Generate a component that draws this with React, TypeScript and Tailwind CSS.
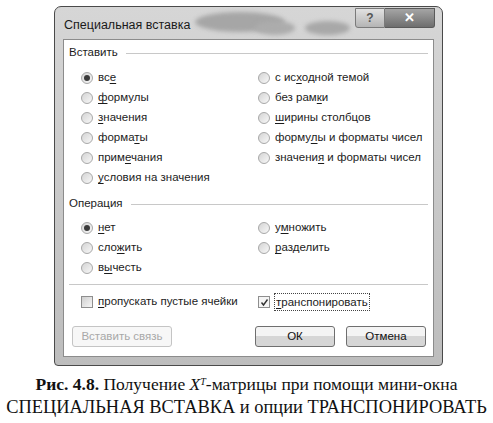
import React from "react";

const UI = { fontFamily: '"Liberation Sans", Arial, sans-serif' };
const SERIF = { fontFamily: '"Liberation Serif", "Times New Roman", serif' };

// label with one underlined access key
const Label = ({ text, k }: { text: string; k?: number }) => {
  if (k === undefined) return <span>{text}</span>;
  return (
    <span>
      {text.slice(0, k)}
      <span className="underline underline-offset-2">{text[k]}</span>
      {text.slice(k + 1)}
    </span>
  );
};

const Radio = ({ text, k, checked }: { text: string; k?: number; checked?: boolean }) => (
  <div className="flex h-[20px] items-center gap-[5px]">
    <span className="flex h-[12px] w-[12px] shrink-0 items-center justify-center rounded-full border border-[#a8a8a8] bg-gradient-to-br from-[#d4d4d4] to-[#f8f8f8]">
      {checked && <span className="h-[6px] w-[6px] rounded-full bg-[#3a3a3a]" />}
    </span>
    <Label text={text} k={k} />
  </div>
);

const GroupHeader = ({ title }: { title: string }) => (
  <div className="flex h-[14px] items-center gap-[8px]">
    <span>{title}</span>
    <div className="h-px flex-1 bg-[#c8c8c8]" />
  </div>
);

const Button = ({ children, w, disabled }: { children: React.ReactNode; w: string; disabled?: boolean }) => (
  <div
    className={`flex h-[21px] items-center justify-center rounded-[3px] border ${w} ${
      disabled
        ? "border-[#c4c4c4] bg-[#f7f7f7] text-[#a8a8a8]"
        : "border-[#6f6f6f] bg-gradient-to-b from-[#f4f4f4] from-50% to-[#d6d6d6] to-50% text-[#111]"
    }`}
  >
    {children}
  </div>
);

export default function App() {
  return (
    <div className="min-h-[423px] w-[493px] bg-white">
      {/* dialog window */}
      <div className="pl-[54px] pt-[6px]">
        <div
          className="relative flex h-[360px] w-[389px] flex-col overflow-hidden rounded-t-[7px] rounded-b-[4px] border border-[#4a4a4a] bg-gradient-to-b from-[#d6d6d6] to-[#bdbdbd] text-[11.5px] text-[#1c1c1c]"
          style={UI}
        >
          {/* glass blobs */}
          <div className="pointer-events-none absolute left-[140px] top-[5px] h-[20px] w-[90px] rounded-[50%] bg-[#a6a6a6] blur-[2px]" />
          <div className="pointer-events-none absolute left-[200px] top-[14px] h-[14px] w-[40px] rounded-[50%] bg-[#acacac] blur-[2px]" />
          <div className="pointer-events-none absolute left-[250px] top-[14px] h-[14px] w-[45px] rounded-[50%] bg-[#a8a8a8] blur-[2px]" />

          {/* title bar */}
          <div className="relative flex h-[32px] shrink-0 items-start justify-between pl-[9px]">
            <span className="mt-[9px] text-[12.5px] text-[#1a1a1a]">Специальная вставка</span>
            <div className="mr-[7px] mt-[1px] flex">
              <div className="flex h-[20px] w-[30px] items-center justify-center rounded-bl-[3px] border border-[#7a7a7a] bg-gradient-to-b from-[#e2e2e2] to-[#b4b4b4] text-[12px] font-bold text-[#555]">
                ?
              </div>
              <div className="flex h-[20px] w-[50px] items-center justify-center rounded-br-[3px] border border-l-0 border-[#5a5a5a] bg-gradient-to-b from-[#a5a5a5] to-[#6e6e6e] text-[13px] font-bold text-white">
                ✕
              </div>
            </div>
          </div>

          {/* client area */}
          <div className="mx-[8px] mb-[8px] flex flex-1 flex-col border border-[#8c8c8c] bg-white px-[5px] pt-[6px]">
            <GroupHeader title="Вставить" />
            <div className="mt-[8px] grid grid-cols-[177px_1fr] pl-[12px]">
              <div className="flex flex-col">
                <Radio text="все" k={2} checked />
                <Radio text="формулы" k={0} />
                <Radio text="значения" k={0} />
                <Radio text="форматы" k={5} />
                <Radio text="примечания" k={4} />
                <Radio text="условия на значения" k={0} />
              </div>
              <div className="flex flex-col">
                <Radio text="с исходной темой" k={4} />
                <Radio text="без рамки" k={7} />
                <Radio text="ширины столбцов" k={0} />
                <Radio text="формулы и форматы чисел" k={5} />
                <Radio text="значения и форматы чисел" k={7} />
              </div>
            </div>

            <div className="mt-[9px]">
              <GroupHeader title="Операция" />
            </div>
            <div className="mt-[7px] grid grid-cols-[177px_1fr] pl-[12px]">
              <div className="flex flex-col">
                <Radio text="нет" k={0} checked />
                <Radio text="сложить" k={3} />
                <Radio text="вычесть" k={1} />
              </div>
              <div className="flex flex-col">
                <Radio text="умножить" k={1} />
                <Radio text="разделить" k={0} />
              </div>
            </div>

            <div className="mt-[6px] h-px bg-[#c8c8c8]" />

            <div className="mt-[7px] grid h-[20px] grid-cols-[177px_1fr] items-center pl-[12px]">
              <div className="flex items-center gap-[5px]">
                <span className="h-[12px] w-[12px] border border-[#8e8e8e] bg-gradient-to-br from-[#cfcfcf] to-[#f6f6f6]" />
                <Label text="пропускать пустые ячейки" k={0} />
              </div>
              <div className="flex items-center gap-[4px]">
                <span className="flex h-[12px] w-[12px] items-center justify-center border border-[#8e8e8e] bg-[#f4f4f4]">
                  <svg width="9" height="9" viewBox="0 0 9 9">
                    <path d="M1.5 4.5 L3.5 7 L7.5 1.5" fill="none" stroke="#333" strokeWidth="1.4" />
                  </svg>
                </span>
                <span className="border border-dotted border-[#444] px-[1px] leading-[16px]">
                  <Label text="транспонировать" k={0} />
                </span>
              </div>
            </div>

            <div className="mt-[14px] flex items-center pl-[3px] pr-[2px]">
              <Button w="w-[100px]" disabled>
                Вставить связь
              </Button>
              <div className="flex-1" />
              <Button w="w-[80px]">ОК</Button>
              <div className="w-[11px]" />
              <Button w="w-[80px]">Отмена</Button>
            </div>
          </div>
        </div>
      </div>

      {/* caption */}
      <div className="mt-[7px] text-center leading-[23px] text-[#111]" style={SERIF}>
        <div className="text-[17.5px]">
          <b>Рис. 4.8.</b> Получение <i>X</i>
          <sup className="text-[10px]">
            <i>T</i>
          </sup>
          -матрицы при помощи мини-окна
        </div>
        <div className="whitespace-nowrap text-[18.4px]">СПЕЦИАЛЬНАЯ ВСТАВКА и опции ТРАНСПОНИРОВАТЬ</div>
      </div>
    </div>
  );
}
